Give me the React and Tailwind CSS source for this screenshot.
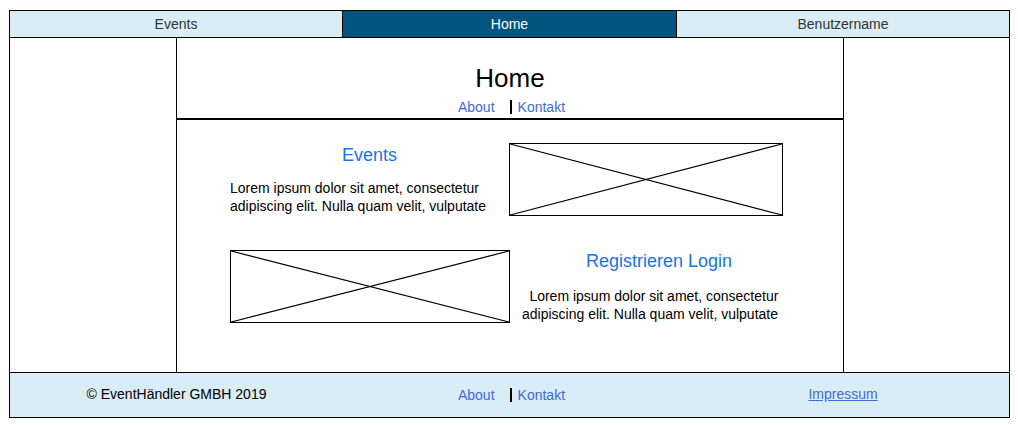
const link = 'text-[#4169e1]';

function Placeholder({ className }) {
  return (
    <div className={`relative border border-black ${className}`}>
      <svg className="absolute inset-0 h-full w-full" preserveAspectRatio="none" viewBox="0 0 100 100">
        <line x1="0" y1="0" x2="100" y2="100" stroke="black" strokeWidth="1.2" vectorEffect="non-scaling-stroke" />
        <line x1="0" y1="100" x2="100" y2="0" stroke="black" strokeWidth="1.2" vectorEffect="non-scaling-stroke" />
      </svg>
    </div>
  );
}

function Links() {
  return (
    <div className="flex items-center justify-center pl-[3px] text-[14px] leading-[18px]">
      <a className={`${link} mr-[15px]`}>About</a>
      <span className="h-[14px] w-[2px] bg-black" />
      <a className={`${link} ml-[6px]`}>Kontakt</a>
    </div>
  );
}

export default function App() {
  return (
    <div className="min-h-[425px] bg-white pt-[10px] font-['Liberation_Sans',Arial,sans-serif] text-black">
      <div className="ml-[9px] w-[1001px] border border-black">
        <nav className="grid h-[27px] grid-cols-[333px_334px_332px] border-b border-black text-[14px]">
          <div className="flex items-center justify-center border-r border-black bg-[#d9edf7] text-[#333]">Events</div>
          <div className="flex items-center justify-center border-r border-black bg-[#005580] text-white">Home</div>
          <div className="flex items-center justify-center bg-[#d9edf7] text-[#333]">Benutzername</div>
        </nav>

        <main className="flex h-[334px]">
          <aside className="w-[167px] border-r border-black" />
          <section className="w-[667px] border-r border-black">
            <header className="border-b-2 border-black pt-[25px] pb-[2px] text-center">
              <h1 className="text-[26px] leading-[30px]">Home</h1>
              <div className="mt-[5px]">
                <Links />
              </div>
            </header>

            <div className="pl-[53px]">
              <div className="mt-[23px] flex">
                <div className="w-[279px]">
                  <h2 className="mt-[2px] text-center text-[18px] leading-[21px] text-[#1a73e8]">Events</h2>
                  <p className="mt-[13px] text-[14px] leading-[18px]">
                    Lorem ipsum dolor sit amet, consectetur
                    <br />
                    adipiscing elit. Nulla quam velit, vulputate
                  </p>
                </div>
                <Placeholder className="h-[73px] w-[274px]" />
              </div>

              <div className="mt-[34px] flex">
                <Placeholder className="h-[73px] w-[280px]" />
                <div className="w-[280px] text-center">
                  <h2 className="ml-[18px] mt-[1px] text-[18px] leading-[21px] text-[#1a73e8]">Registrieren Login</h2>
                  <p className="mt-[15px] text-[14px] leading-[18px]">
                    &nbsp;&nbsp;Lorem ipsum dolor sit amet, consectetur
                    <br />
                    adipiscing elit. Nulla quam velit, vulputate
                  </p>
                </div>
              </div>
            </div>
          </section>
          <aside className="flex-1" />
        </main>

        <footer className="grid h-[45px] grid-cols-[333px_334px_332px] items-center border-t border-black bg-[#d9edf7] pb-[1px] text-[14px]">
          <div className="text-center">© EventHändler GMBH 2019</div>
          <Links />
          <div className="text-center">
            <a className={`${link} underline`}>Impressum</a>
          </div>
        </footer>
      </div>
    </div>
  );
}
